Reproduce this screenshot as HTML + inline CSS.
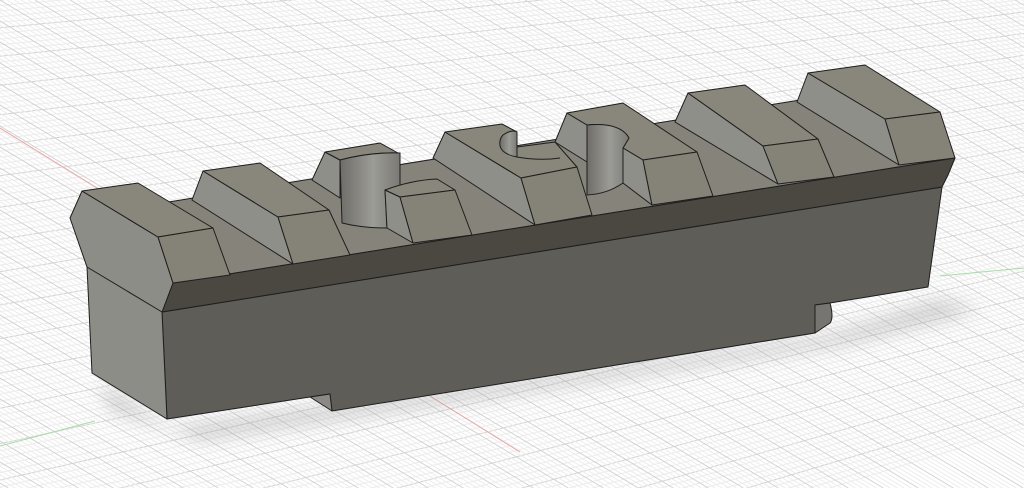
<!DOCTYPE html>
<html><head><meta charset="utf-8"><style>
html,body{margin:0;padding:0;background:#fff;width:1024px;height:488px;overflow:hidden}
svg{display:block;overflow:hidden}
</style></head><body>
<svg id="s" width="1024" height="488" viewBox="0 0 1024 488" xmlns="http://www.w3.org/2000/svg">
<defs>
<linearGradient id="cyl" x1="0" x2="1" y1="0" y2="0">
<stop offset="0" stop-color="#6e6d68"/><stop offset="0.55" stop-color="#9c9c96"/><stop offset="1" stop-color="#7a7974"/>
</linearGradient>
<filter id="blur" x="-20%" y="-50%" width="140%" height="200%"><feGaussianBlur stdDeviation="9"/></filter>
</defs>
<g id="grid"></g>
<line x1="0" y1="128" x2="110" y2="196" stroke="#e7a3a3" stroke-width="1"/>
<line x1="430" y1="396" x2="520" y2="452" stroke="#e7a3a3" stroke-width="1"/>
<line x1="0" y1="446" x2="95" y2="421" stroke="#a8dca8" stroke-width="1"/>
<line x1="940" y1="276" x2="1024" y2="268" stroke="#a8dca8" stroke-width="1"/>
<polygon points="100,380 170,428 830,335 940,300 980,310 840,345 200,440 110,410" fill="#9a9a9a" opacity="0.45" filter="url(#blur)"/>
<g stroke="#1e1e1e" stroke-width="1" stroke-linejoin="round">
<polygon points="150,205 800,100 955,158 173,283" fill="#86837a"/>
<polygon points="162,312 942,187 928,287 830,303 815,305 815,333 332,411 330,394 310,397 167,419" fill="#5f5d58"/>
<polygon points="310,397 330,394 332,411" fill="#8a8985"/>
<path d="M815,305 L830,303 Q834,318 830,323 L815,333 Z" fill="#76756f"/>
<polygon points="173,283 955,158 948,175 942,187 162,312" fill="#4b4842"/>
<polygon points="82,191 70,218 87,267 92,373 167,419 162,312 173,283 158,237" fill="#8d8d88"/>
<line x1="87" y1="267" x2="162" y2="312"/>
<!-- tooth 1 -->
<polygon points="82,191 138,183 213,228 158,237" fill="#89867c"/>
<polygon points="158,237 213,228 230,275 173,283" fill="#858277"/>
<!-- tooth 2 -->
<polygon points="203,171 192,200 293,264 278,217" fill="#8f8f8a"/>
<polygon points="203,171 260,163 329,210 278,217" fill="#89867c"/>
<polygon points="278,217 329,210 350,255 293,264" fill="#858277"/>
<!-- tooth 3 back -->
<polygon points="325,152 312,180 340,198 340,160" fill="#8f8f8a"/>
<path d="M325,152 L380,143 L398,153 Q370,152 340,160 Z" fill="#89867c"/>
<path d="M340,160 Q370,152 400,153 L400,190 L385,190 L387,228 Q362,228 342,223 Z" fill="url(#cyl)"/>
<!-- tooth 3 front -->
<polygon points="385,190 400,197 413,243 387,228" fill="#8f8f8a"/>
<path d="M385,190 Q412,180 437,179 L455,190 L400,197 Z" fill="#89867c"/>
<polygon points="400,197 455,190 472,235 413,243" fill="#858277"/>
<!-- tooth 4 -->
<polygon points="445,132 433,158 535,225 521,178" fill="#8f8f8a"/>
<polygon points="445,132 502,124 517,132 517,147 555,142 577,167 521,178" fill="#89867c"/>
<path d="M503,135 Q512,129 517,132 L517,157 Q502,154 500,146 Q499,139 503,135 Z" fill="url(#cyl)"/>
<path d="M517,157 Q540,161 560,158" fill="none"/>
<polygon points="521,178 577,167 592,215 535,225" fill="#858277"/>
<!-- tooth 5 -->
<polygon points="567,113 555,142 587,162 587,125" fill="#8f8f8a"/>
<path d="M567,113 L623,103 L697,152 L643,160 L623,148 L629,138 Q620,122 587,125 Z" fill="#89867c"/>
<path d="M587,125 Q620,122 629,138 L623,148 L623,183 Q607,194 587,195 Z" fill="url(#cyl)"/>
<polygon points="623,148 643,160 652,205 623,183" fill="#8f8f8a"/>
<polygon points="643,160 697,152 713,196 652,205" fill="#858277"/>
<!-- tooth 6 -->
<polygon points="688,93 675,122 778,184 763,146" fill="#8f8f8a"/>
<polygon points="688,93 745,85 818,139 763,146" fill="#89867c"/>
<polygon points="763,146 818,139 834,177 778,184" fill="#858277"/>
<!-- tooth 7 -->
<polygon points="808,73 797,102 899,165 885,119" fill="#8f8f8a"/>
<polygon points="808,73 865,65 940,112 885,119" fill="#89867c"/>
<polygon points="885,119 940,112 955,158 899,165" fill="#858277"/>
</g>
</svg>
<script>
(function(){
var g=document.getElementById('grid'),h='';
var vx=3385,vy=-295;
for(var i=-40;i<110;i++){
 var y0=i*5.5+(i>0?i*i*0.012:0);
 var major=(i%5===0);
 var sl=(vy-y0)/vx;
 h+='<line x1="0" y1="'+y0.toFixed(1)+'" x2="1024" y2="'+(y0+sl*1024).toFixed(1)+'" stroke="'+(major?'#d3d3d3':'#ececec')+'" stroke-width="1"/>';
}
for(var j=-120;j<150;j++){
 var x0=j*7;
 var major=(j%5===0);
 h+='<line x1="'+x0+'" y1="0" x2="'+(x0+488/0.6).toFixed(1)+'" y2="488" stroke="'+(major?'#d3d3d3':'#ececec')+'" stroke-width="1"/>';
}
g.innerHTML=h;
})();
</script>
</body></html>
